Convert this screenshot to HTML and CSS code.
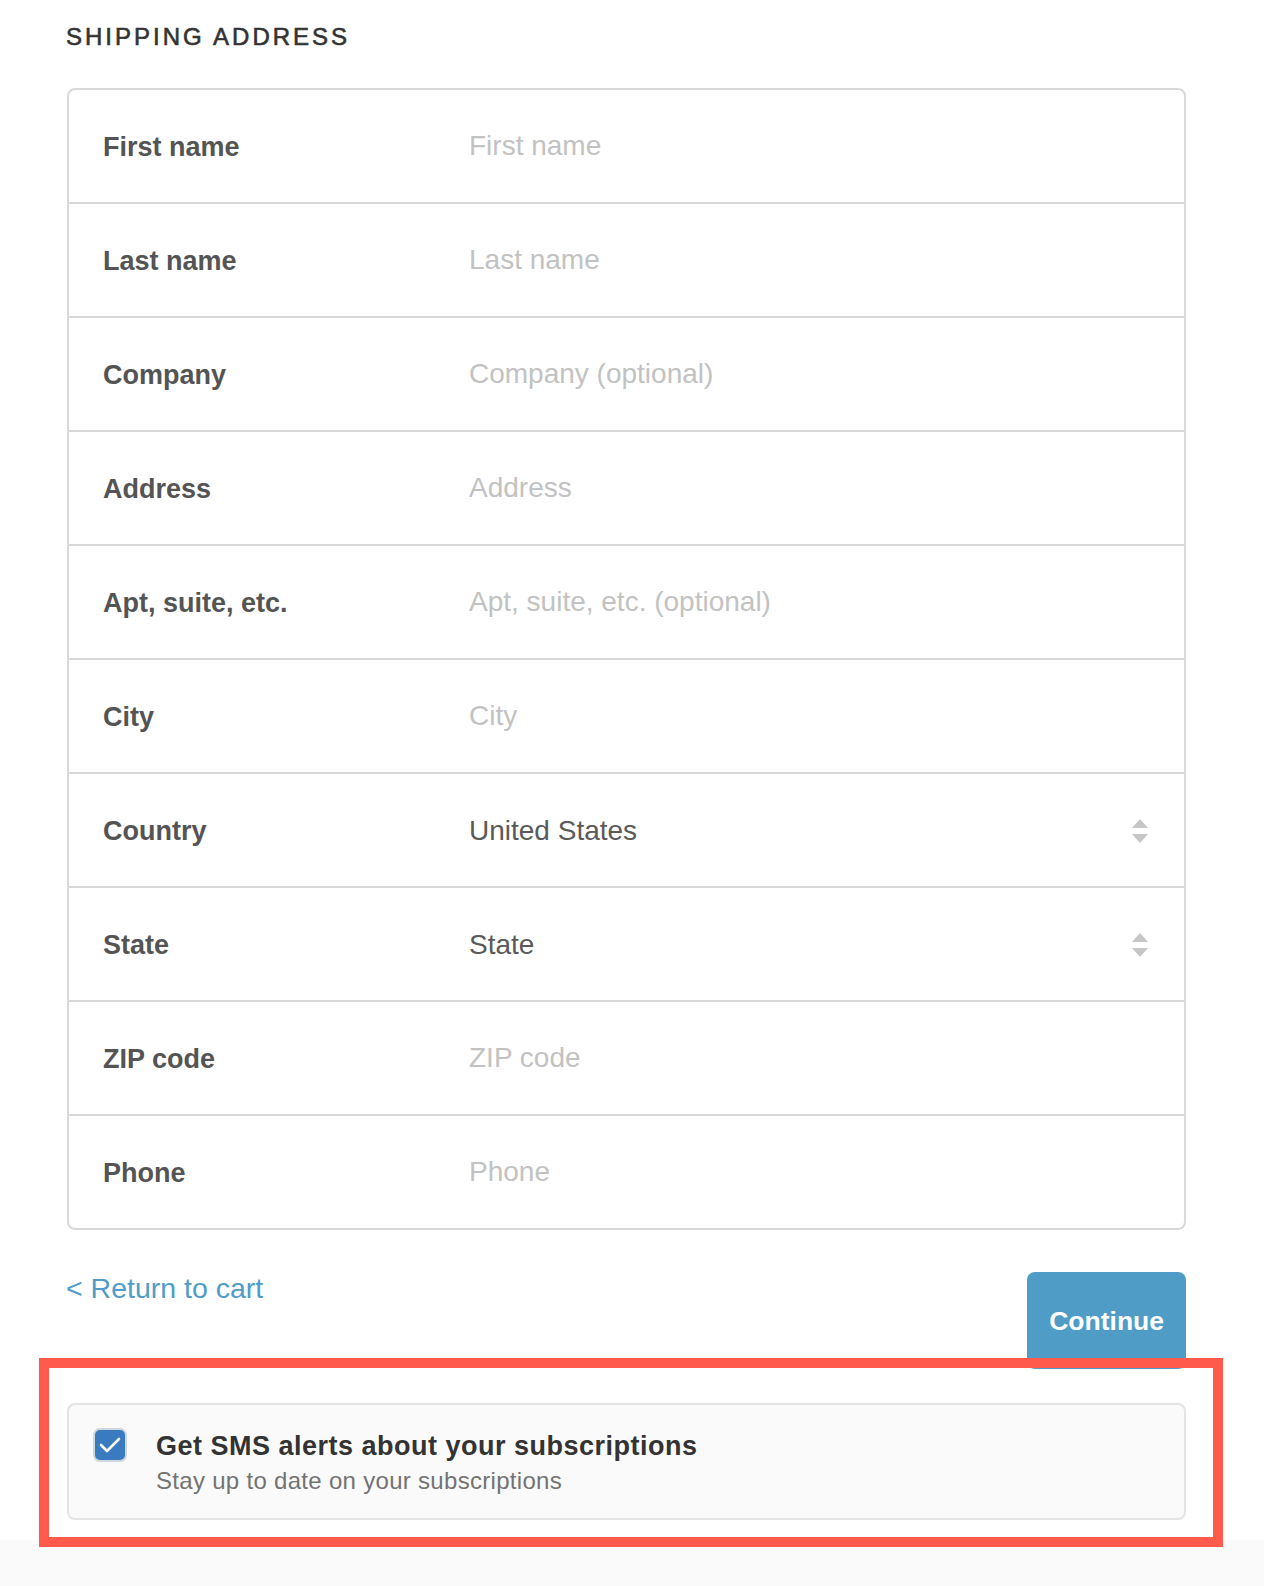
FILE: index.html
```html
<!DOCTYPE html>
<html lang="en">
<head>
    <meta charset="UTF-8">
    <meta name="viewport" content="width=device-width, initial-scale=1.0">
    <title>Shipping Address</title>
    <link rel="stylesheet" href="styles.css">
</head>
<body>
    <div class="checkout">
        <h2>Shipping address</h2>

        <div class="address-form">
            <div class="row">
                <label for="first-name">First name</label>
                <input type="text" id="first-name" placeholder="First name">
            </div>
            <div class="row">
                <label for="last-name">Last name</label>
                <input type="text" id="last-name" placeholder="Last name">
            </div>
            <div class="row">
                <label for="company">Company</label>
                <input type="text" id="company" placeholder="Company (optional)">
            </div>
            <div class="row">
                <label for="address">Address</label>
                <input type="text" id="address" placeholder="Address">
            </div>
            <div class="row">
                <label for="apt">Apt, suite, etc.</label>
                <input type="text" id="apt" placeholder="Apt, suite, etc. (optional)">
            </div>
            <div class="row">
                <label for="city">City</label>
                <input type="text" id="city" placeholder="City">
            </div>
            <div class="row">
                <label for="country">Country</label>
                <div class="select-wrap">
                    <select id="country">
                        <option>United States</option>
                        <option>Canada</option>
                    </select>
                    <svg class="arrows" width="16" height="24" viewBox="0 0 16 24">
                        <path d="M8 0 L16 9 L0 9 Z" />
                        <path d="M0 15 L16 15 L8 24 Z" />
                    </svg>
                </div>
            </div>
            <div class="row">
                <label for="state">State</label>
                <div class="select-wrap">
                    <select id="state">
                        <option>State</option>
                        <option>California</option>
                        <option>New York</option>
                    </select>
                    <svg class="arrows" width="16" height="24" viewBox="0 0 16 24">
                        <path d="M8 0 L16 9 L0 9 Z" />
                        <path d="M0 15 L16 15 L8 24 Z" />
                    </svg>
                </div>
            </div>
            <div class="row">
                <label for="zip">ZIP code</label>
                <input type="text" id="zip" placeholder="ZIP code">
            </div>
            <div class="row">
                <label for="phone">Phone</label>
                <input type="tel" id="phone" placeholder="Phone">
            </div>
        </div>

        <div class="actions">
            <a href="#" class="return-link">&lt; Return to cart</a>
            <button class="continue-button">Continue</button>
        </div>

        <label class="sms-box">
            <span class="checkbox">
                <svg width="34" height="34" viewBox="0 0 34 34">
                    <polyline points="8,17 14,23 26,11" />
                </svg>
            </span>
            <span class="sms-text">
                <span class="sms-title">Get SMS alerts about your subscriptions</span>
                <span class="sms-sub">Stay up to date on your subscriptions</span>
            </span>
        </label>

        <div class="highlight"></div>
    </div>
    <div class="footer"></div>
</body>
</html>
```

FILE: styles.css
```css
body {
    font-family: "Liberation Sans", Arial, sans-serif;
    background-color: #fff;
    margin: 0;
}
.checkout {
    position: relative;
    padding: 23px 78px 20px 66px;
}
h2 {
    margin: 0 0 37px;
    font-size: 24px;
    line-height: 28px;
    font-weight: normal;
    text-transform: uppercase;
    letter-spacing: 3px;
    color: #333;
    -webkit-text-stroke: 0.6px #333;
}
.address-form {
    margin-left: 1px;
    border: 2px solid #d9d9d9;
    border-radius: 8px;
}
.row {
    display: flex;
    align-items: center;
    height: 112px;
    padding: 0 36px 0 34px;
    border-bottom: 2px solid #d9d9d9;
}
.row:last-child {
    border-bottom: none;
}
.row label {
    width: 366px;
    flex-shrink: 0;
    padding-top: 3px;
    font-size: 27px;
    font-weight: bold;
    color: #545454;
}
.row input,
.row select {
    flex: 1;
    min-width: 0;
    border: none;
    outline: none;
    background: transparent;
    padding: 0;
    font-family: inherit;
    font-size: 28px;
    color: #5a5a5a;
}
.row input::placeholder {
    color: #c2c2c2;
}
.select-wrap {
    flex: 1;
    display: flex;
    align-items: center;
}
.row select {
    appearance: none;
    -webkit-appearance: none;
    cursor: pointer;
}
.arrows {
    fill: #c6c6c6;
    pointer-events: none;
    margin-top: 2px;
}
.actions {
    display: flex;
    justify-content: space-between;
    align-items: flex-start;
    margin: 42px 0 34px;
}
.return-link {
    font-size: 28.5px;
    line-height: 32px;
    color: #4f9cc8;
    text-decoration: none;
}
.continue-button {
    height: 97px;
    padding: 2px 22px 0;
    border: none;
    border-radius: 8px;
    background-color: #4f9dc6;
    color: #fff;
    font-family: inherit;
    font-size: 26.5px;
    font-weight: bold;
    cursor: pointer;
}
.continue-button:hover {
    background-color: #3f8ab3;
}
.sms-box {
    display: flex;
    align-items: flex-start;
    gap: 29px;
    margin-left: 1px;
    padding: 23px 24px;
    background: #fafafa;
    border: 2px solid #e4e4e4;
    border-radius: 8px;
    cursor: pointer;
}
.checkbox {
    width: 34px;
    height: 34px;
    box-sizing: border-box;
    border: 2px solid #cfd6de;
    border-radius: 7px;
    background: #3a7bbf;
    display: flex;
    align-items: center;
    justify-content: center;
    flex-shrink: 0;
}
.checkbox svg {
    margin: -2px;
}
.checkbox polyline {
    fill: none;
    stroke: #fff;
    stroke-width: 2.6;
    stroke-linecap: round;
    stroke-linejoin: round;
}
.sms-text {
    display: flex;
    flex-direction: column;
    gap: 6px;
    margin-top: 3px;
}
.sms-title {
    font-size: 27px;
    line-height: 30px;
    letter-spacing: 0.5px;
    font-weight: bold;
    color: #333;
}
.sms-sub {
    font-size: 24px;
    line-height: 28px;
    letter-spacing: 0.3px;
    color: #737373;
}
/* annotation frame around the SMS option */
.highlight {
    position: absolute;
    left: 39px;
    top: 1358px;
    width: 1164px;
    height: 169px;
    border: 10px solid #ff5a4c;
    pointer-events: none;
}
.footer {
    height: 60px;
    background: #fafafa;
}
```
